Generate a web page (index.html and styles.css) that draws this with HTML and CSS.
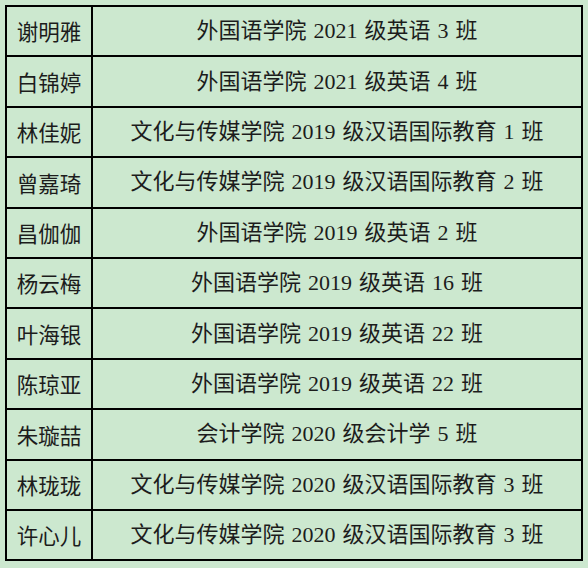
FILE: index.html
```html
<!DOCTYPE html>
<html lang="zh-CN">
<head>
<meta charset="utf-8">
<title>名单</title>
<link rel="stylesheet" href="styles.css">
</head>
<body>
<table class="roster">
  <tr><td class="name">谢明雅</td><td class="cls">外国语学院 2021 级英语 3 班</td></tr>
  <tr><td class="name">白锦婷</td><td class="cls">外国语学院 2021 级英语 4 班</td></tr>
  <tr><td class="name">林佳妮</td><td class="cls">文化与传媒学院 2019 级汉语国际教育 1 班</td></tr>
  <tr><td class="name">曾嘉琦</td><td class="cls">文化与传媒学院 2019 级汉语国际教育 2 班</td></tr>
  <tr><td class="name">昌伽伽</td><td class="cls">外国语学院 2019 级英语 2 班</td></tr>
  <tr><td class="name">杨云梅</td><td class="cls">外国语学院 2019 级英语 16 班</td></tr>
  <tr><td class="name">叶海银</td><td class="cls">外国语学院 2019 级英语 22 班</td></tr>
  <tr><td class="name">陈琼亚</td><td class="cls">外国语学院 2019 级英语 22 班</td></tr>
  <tr><td class="name">朱璇喆</td><td class="cls">会计学院 2020 级会计学 5 班</td></tr>
  <tr><td class="name">林珑珑</td><td class="cls">文化与传媒学院 2020 级汉语国际教育 3 班</td></tr>
  <tr><td class="name">许心儿</td><td class="cls">文化与传媒学院 2020 级汉语国际教育 3 班</td></tr>
</table>
</body>
</html>
```
FILE: styles.css
```css
html, body {
  margin: 0;
  padding: 0;
  background: #cce8cf;
}
body {
  padding: 5px 0 0 5px;
  width: 588px;
  height: 568px;
  box-sizing: border-box;
  overflow: hidden;
}
.roster {
  border-collapse: collapse;
  border: 2px solid #000;
  width: 578px;
  table-layout: fixed;
  font-family: "Liberation Serif", "Noto Sans CJK SC", serif;
  font-size: 22px;
  color: #1c1c1c;
}
.roster tr {
  height: 50.4px;
}
.roster td {
  border: 2px solid #000;
  padding: 0;
  text-align: center;
  vertical-align: middle;
  line-height: 1;
  white-space: nowrap;
  word-spacing: 1.5px;
}
.roster .name {
  width: 84px;
  font-family: "Noto Sans CJK SC", sans-serif;
  font-size: 21.5px;
}
```
